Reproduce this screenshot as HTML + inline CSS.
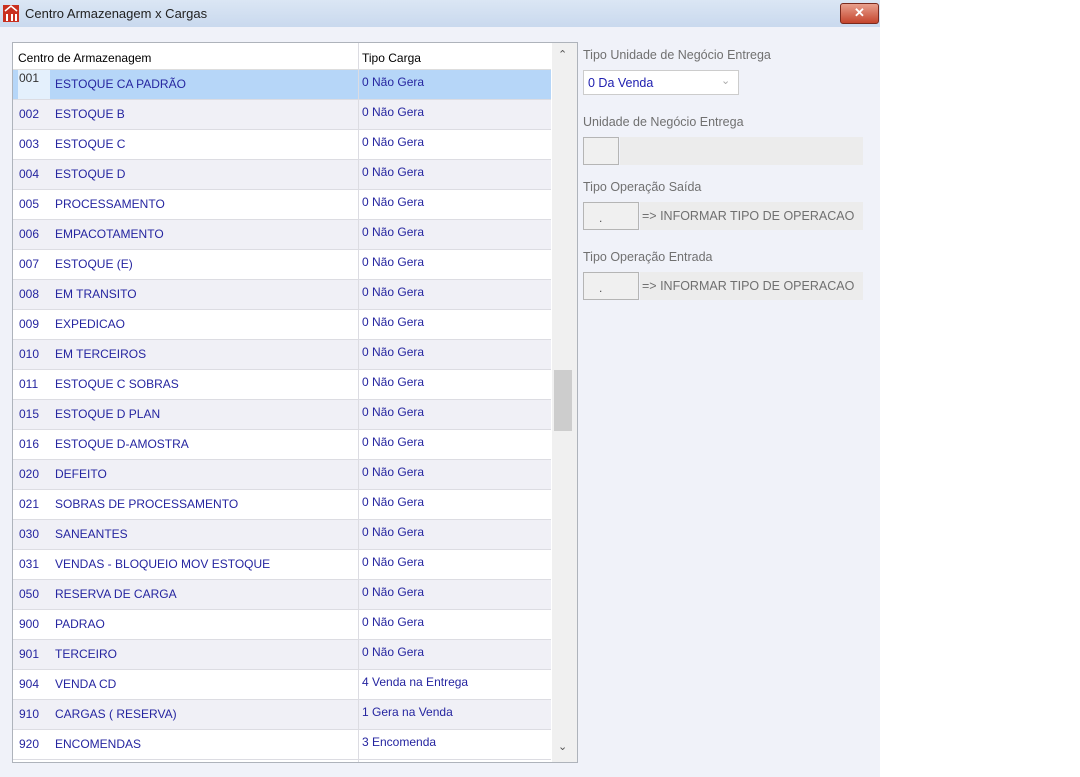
<!DOCTYPE html>
<html><head><meta charset="utf-8"><style>
body{margin:0;width:1080px;height:777px;background:#fff;font-family:"Liberation Sans",sans-serif;font-size:12px;position:relative;overflow:hidden}
.win{position:absolute;left:0;top:0;width:880px;height:777px;background:#f0f2f9}
.title{position:absolute;left:0;top:0;width:880px;height:27px;background:linear-gradient(#dbe6f4,#c9d9ee);}
.title span{position:absolute;left:25px;top:6px;font-size:13px;color:#222}
.close{position:absolute;left:840px;top:3px;width:37px;height:19px;border-radius:3px;background:linear-gradient(#e9a08e,#c4452d);border:1px solid #7a2a1e;color:#fff;text-align:center;font-weight:bold;font-size:13px;line-height:18px}
.grid{position:absolute;left:12px;top:42px;width:564px;height:719px;border:1px solid #aeb3bb;background:#fff;overflow:hidden}
.hdr{position:absolute;left:0;top:0;width:538px;height:26px;background:#fff;border-bottom:1px solid #ddd}
.hdr div{position:absolute;top:8px;color:#000}
.row{position:absolute;left:0;width:538px;height:29px;border-bottom:1px solid #dcdce2;color:#2525a0}
.row.g{background:#f0f0f6}
.row.sel{background:#b6d6f8}
.row span{position:absolute;top:7px}
.vl{position:absolute;left:345px;top:0;width:1px;height:719px;background:#dcdce2}
.sb{position:absolute;left:539px;top:0;width:25px;height:719px;background:#f0f0f0}
.lbl{position:absolute;color:#707070;font-size:12.5px}
.box{position:absolute;background:#ececec}
.inp{position:absolute;border:1px solid #b5b5b5;background:#f0f0f0}
</style></head><body>
<div class="win">
<div class="title">
<svg style="position:absolute;left:3px;top:5px" width="16" height="17"><rect x="0" y="0" width="16" height="17" fill="#c9301f"/><path d="M2 6 L8 1 L14 6" stroke="#fff" stroke-width="1.5" fill="none"/><rect x="3" y="9" width="2" height="7" fill="#fff"/><rect x="8" y="9" width="2" height="7" fill="#fff"/><rect x="12" y="9" width="2" height="7" fill="#fff"/></svg>
<span>Centro Armazenagem x Cargas</span>
<div class="close">✕</div>
</div>
<div class="grid">
<div class="hdr"><div style="left:5px">Centro de Armazenagem</div><div style="left:349px">Tipo Carga</div></div>
<div id="rows"></div>
<div class="vl"></div>
<div class="sb">
<div style="position:absolute;left:6px;top:5px;color:#555;font-size:11px">&#8963;</div>
<div style="position:absolute;left:2px;top:327px;width:18px;height:61px;background:#cdcdcd"></div>
<div style="position:absolute;left:6px;top:697px;color:#555;font-size:11px">&#8964;</div>
</div>
</div>
<div class="lbl" style="left:583px;top:48px">Tipo Unidade de Negócio Entrega</div>
<div style="position:absolute;left:583px;top:70px;width:154px;height:23px;border:1px solid #ccc;background:#fff"><span style="position:absolute;left:4px;top:5px;color:#2020b0;font-size:12.5px">0 Da Venda</span><span style="position:absolute;left:137px;top:3px;color:#aaa;font-size:11px">&#8964;</span></div>
<div class="lbl" style="left:583px;top:115px">Unidade de Negócio Entrega</div>
<div class="box" style="left:620px;top:137px;width:243px;height:28px"></div>
<div class="inp" style="left:583px;top:137px;width:34px;height:26px"></div>
<div class="lbl" style="left:583px;top:180px">Tipo Operação Saída</div>
<div class="box" style="left:640px;top:202px;width:223px;height:28px"></div>
<div class="inp" style="left:583px;top:202px;width:54px;height:26px"><span style="position:absolute;left:15px;top:8px;color:#555">.</span></div>
<div class="lbl" style="left:642px;top:209px">=&gt; INFORMAR TIPO DE OPERACAO</div>
<div class="lbl" style="left:583px;top:250px">Tipo Operação Entrada</div>
<div class="box" style="left:640px;top:272px;width:223px;height:28px"></div>
<div class="inp" style="left:583px;top:272px;width:54px;height:26px"><span style="position:absolute;left:15px;top:8px;color:#555">.</span></div>
<div class="lbl" style="left:642px;top:279px">=&gt; INFORMAR TIPO DE OPERACAO</div>
</div>
<script>
var d=[["001","ESTOQUE CA PADRÃO","0 Não Gera"],["002","ESTOQUE B","0 Não Gera"],["003","ESTOQUE C","0 Não Gera"],["004","ESTOQUE D","0 Não Gera"],["005","PROCESSAMENTO","0 Não Gera"],["006","EMPACOTAMENTO","0 Não Gera"],["007","ESTOQUE (E)","0 Não Gera"],["008","EM TRANSITO","0 Não Gera"],["009","EXPEDICAO","0 Não Gera"],["010","EM TERCEIROS","0 Não Gera"],["011","ESTOQUE C SOBRAS","0 Não Gera"],["015","ESTOQUE D PLAN","0 Não Gera"],["016","ESTOQUE D-AMOSTRA","0 Não Gera"],["020","DEFEITO","0 Não Gera"],["021","SOBRAS DE PROCESSAMENTO","0 Não Gera"],["030","SANEANTES","0 Não Gera"],["031","VENDAS - BLOQUEIO MOV ESTOQUE","0 Não Gera"],["050","RESERVA DE CARGA","0 Não Gera"],["900","PADRAO","0 Não Gera"],["901","TERCEIRO","0 Não Gera"],["904","VENDA CD","4 Venda na Entrega"],["910","CARGAS ( RESERVA)","1 Gera na Venda"],["920","ENCOMENDAS","3 Encomenda"]];
var h="";d.forEach(function(r,i){var c=i==0?"row sel":(i%2?"row g":"row");var t=27+i*30;
h+='<div class="'+c+'" style="top:'+t+'px">'+(i==0?'<div style="position:absolute;left:5px;top:0;width:32px;height:29px;background:#e4f0fc"></div>':'')+'<span style="left:6px;'+(i==0?'top:1px;color:#333':'')+'">'+r[0]+'</span><span style="left:42px">'+r[1]+'</span><span style="left:349px;top:5px">'+r[2]+'</span></div>';});
document.getElementById("rows").innerHTML=h;
</script>
</body></html>
